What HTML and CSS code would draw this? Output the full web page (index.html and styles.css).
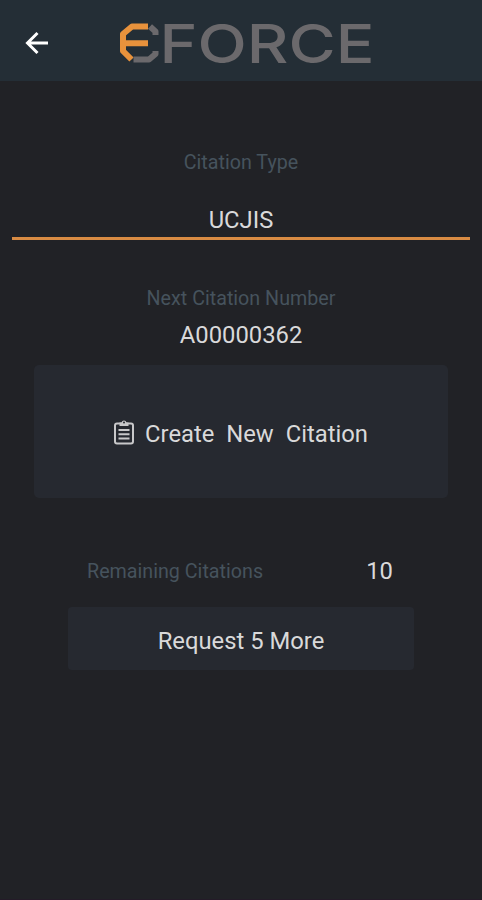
FILE: index.html
```
<!DOCTYPE html>
<html lang="en">
<head>
    <meta charset="UTF-8">
    <meta name="viewport" content="width=device-width, initial-scale=1.0">
    <title>EFORCE Citations</title>
    <link rel="stylesheet" href="styles.css">
</head>
<body>
    <header class="header">
        <button class="back-button" aria-label="Back">
            <svg width="24" height="24" viewBox="0 0 24 24">
                <path d="M23 12H3.5M12.5 2L2.5 12L12.5 22"/>
            </svg>
        </button>
        <svg class="logo" width="262" height="76" viewBox="0 -16 262 76" role="img" aria-label="EFORCE">
            <!-- two-tone emblem -->
            <path class="logo-orange" d="M30 5.5H14L5 13V30L13.5 38.5M5 22.2H30"/>
            <path class="logo-gray" d="M32 5.5L37.5 10.5V14M15.5 38.5H31L37.5 33V30"/>
            <text class="logo-text" x="41.5" y="41.5" textLength="215" lengthAdjust="spacingAndGlyphs">FORCE</text>
        </svg>
    </header>

    <main class="content">
        <div class="label">Citation Type</div>
        <div class="type-select">UCJIS</div>

        <div class="label">Next Citation Number</div>
        <div class="number">A00000362</div>

        <button class="create-button">
            <svg class="clipboard" width="22" height="26" viewBox="0 0 22 26">
                <rect x="2" y="4.5" width="18" height="20" rx="2"/>
                <path d="M5.5 11H16.5M5.5 15.3H16.5M5.5 19.6H16.5"/>
                <path class="clip" d="M6.5 7V3.5H8.5A2.6 2.6 0 0 1 13.5 3.5H15.5V7Z"/>
                <circle class="clip-hole" cx="11" cy="3.5" r="1"/>
            </svg>
            <span>Create New Citation</span>
        </button>

        <div class="remaining">
            <span class="label">Remaining Citations</span>
            <span class="count">10</span>
        </div>
        <button class="request-button">Request 5 More</button>
    </main>
</body>
</html>
```
FILE: styles.css
```
* {
    box-sizing: border-box;
}
body {
    margin: 0;
    height: 900px;
    background-color: #212226;
    border-bottom: 1px solid #241b28;
    color: #d9d9da;
    font-family: Roboto, sans-serif;
    font-size: 23.8px;
    overflow: hidden;
}
button {
    border: none;
    padding: 0;
    color: inherit;
    font: inherit;
}
.header {
    display: flex;
    align-items: center;
    height: 81px;
    padding: 5px 0 0 25px;
    background-color: #242e36;
}
.back-button {
    width: 24px;
    height: 24px;
    background: none;
}
.back-button svg {
    display: block;
    fill: none;
    stroke: #fff;
    stroke-width: 3;
}
.logo {
    margin-left: 69px;
}
.logo-orange,
.logo-gray {
    fill: none;
    stroke: #e8923c;
    stroke-width: 6;
    stroke-linejoin: round;
}
.logo-gray {
    stroke: #6b696c;
}
.logo-text {
    fill: #6b696c;
    font-family: Inter, sans-serif;
    font-size: 54px;
    font-weight: 500;
}
.content {
    display: flex;
    flex-direction: column;
    padding: 69px 12px 0;
    text-align: center;
}
.label {
    padding: 1px 0;
    color: #46535d;
    font-size: 19.7px;
    line-height: 23px;
}
.type-select {
    height: 65px;
    margin-bottom: 46px;
    padding-top: 31px;
    border-bottom: 3px solid #d88b43;
    line-height: 28px;
}
.number {
    margin-top: 10px;
    line-height: 28px;
}
.create-button {
    display: flex;
    align-items: center;
    justify-content: center;
    gap: 10px;
    height: 133px;
    margin: 16px 22px 0;
    padding: 5px 1px 0 0;
    border-radius: 5px;
    background-color: #262930;
    word-spacing: 6px;
}
.clipboard {
    margin-bottom: 5px;
    fill: none;
    stroke: #c8c8ca;
    stroke-width: 2;
}
.clipboard .clip {
    fill: #c8c8ca;
    stroke: none;
}
.clipboard .clip-hole {
    fill: #262930;
    stroke: none;
}
.remaining {
    display: flex;
    align-items: center;
    justify-content: space-between;
    margin: 59px 77px 0 75px;
    line-height: 28px;
}
.request-button {
    height: 63px;
    margin: 22px 56px 0;
    padding-top: 4px;
    border-radius: 4px;
    background-color: #262930;
}
```
